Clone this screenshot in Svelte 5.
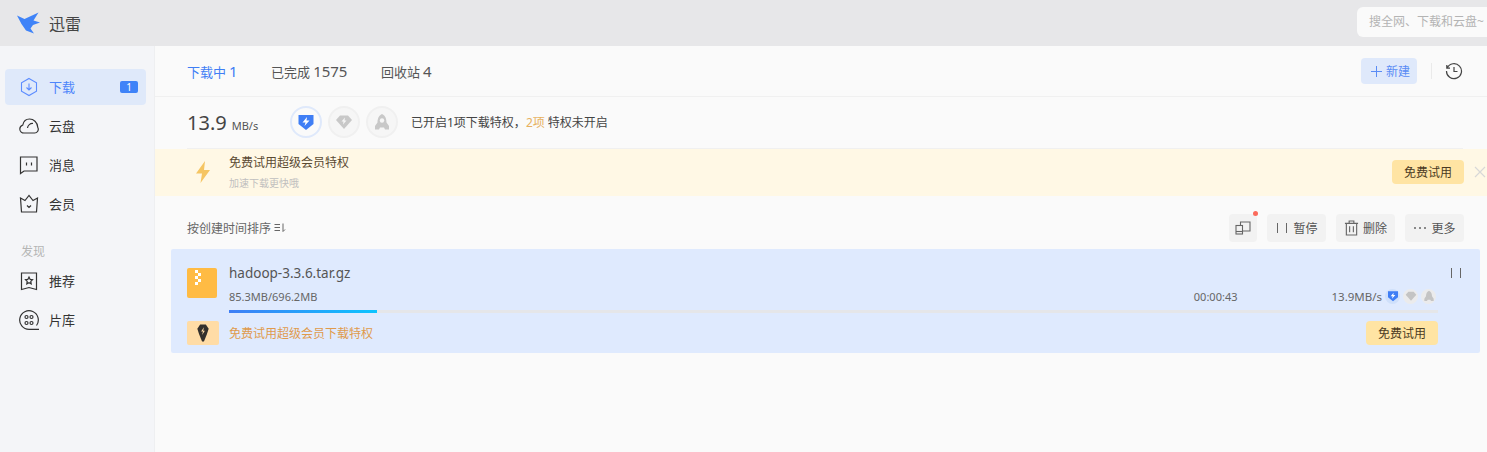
<script>
  let tabs = [
    { label: '下载中', count: 1, active: true },
    { label: '已完成', count: 1575 },
    { label: '回收站', count: 4 }
  ];
</script>

<div class="app">
  <header class="titlebar">
    <div class="brand">
      <svg class="logo" width="26" height="24" viewBox="0 0 26 24">
        <path fill="#3f83f8" d="M1 4.500 8.500 8 22.500 1.500 17.500 9.500 24 11.500 17 14 14.500 17.500 18 22.500 10 19.500 5.500 13 Z" />
      </svg>
      <span>迅雷</span>
    </div>
    <div class="search">搜全网、下载和云盘~</div>
  </header>

  <div class="body">
    <aside class="sidebar">
      <nav>
        <a class="nav active" href="#dl">
          <svg width="20" height="20" viewBox="0 0 20 20" fill="none" stroke="#5c8cff" stroke-width="1.100">
            <path d="M10 1.500 17.500 5.800V14.200L10 18.500 2.500 14.200V5.800Z" />
            <path d="M10 6.500V13M7.500 10.500 10 13 12.500 10.500" />
          </svg>
          <span>下载</span>
          <b class="count">1</b>
        </a>
        <a class="nav" href="#cloud">
          <svg width="20" height="20" viewBox="0 0 20 20" fill="none" stroke="#333" stroke-width="1.200">
            <path d="M5 17H15.500A3.700 3.700 0 0 0 18.800 11.500C18.500 6 14.500 3 10.500 3 7 3 4.500 5.500 3.800 9 1.500 10 .8 11.500 .8 13 .8 15.500 3 17 5 17Z" />
            <path d="M8.500 12A5 5 0 0 1 14 7.500" />
          </svg>
          <span>云盘</span>
        </a>
        <a class="nav" href="#msg">
          <svg width="20" height="20" viewBox="0 0 20 20" fill="none" stroke="#333" stroke-width="1.200">
            <path d="M1.500 2H18V16H5L1.500 18.500Z" />
            <path d="M7.500 7.500V10.500M12.500 7.500V10.500" />
          </svg>
          <span>消息</span>
        </a>
        <a class="nav" href="#vip">
          <svg width="20" height="20" viewBox="0 0 20 20" fill="none" stroke="#333" stroke-width="1.200">
            <path d="M1.500 4 6 6.500 10 1.500 14 6.500 18.500 4 17.500 18H2.500Z" />
            <path d="M8 11.500 10 13.500 12 11.500" />
          </svg>
          <span>会员</span>
        </a>
        <p class="nav-title">发现</p>
        <a class="nav" href="#rec">
          <svg width="20" height="20" viewBox="0 0 20 20" fill="none" stroke="#333" stroke-width="1.200">
            <path d="M2.500 2H17.500V18.500L10 16.500 2.500 18.500Z" />
            <path d="M10 6 11.200 8.400 13.500 8.700 11.800 10.400 12.200 12.800 10 11.600 7.800 12.800 8.200 10.400 6.500 8.700 8.800 8.400Z" />
          </svg>
          <span>推荐</span>
        </a>
        <a class="nav" href="#lib">
          <svg width="20" height="20" viewBox="0 0 20 20" fill="none" stroke="#333" stroke-width="1.200">
            <path d="M10 19.300A9.300 9.300 0 1 1 17.500 15.500M10 19.300H20" />
            <circle cx="7.500" cy="7" r="1.500" />
            <circle cx="12.500" cy="7" r="1.500" />
            <circle cx="7.500" cy="13" r="1.500" />
            <circle cx="12.500" cy="13" r="1.500" />
          </svg>
          <span>片库</span>
        </a>
      </nav>
    </aside>

    <main class="main">
      <div class="tabs">
        {#each tabs as tab}
          <span class="tab" class:current={tab.active}>{tab.label}<i>{tab.count}</i></span>
        {/each}
        <button class="new">
          <svg width="11" height="11" viewBox="0 0 11 11" stroke="#5a8cf5"><path d="M5.500 0V11M0 5.500H11" /></svg>
          新建
        </button>
        <span class="divider"></span>
        <svg class="history" width="18" height="18" viewBox="0 0 18 18" fill="none" stroke="#444" stroke-width="1.200">
          <path d="M2.200 6A7.500 7.500 0 1 1 1.500 9M1.800 3V6.200H5" />
          <path d="M9 5V9.500H12.500" />
        </svg>
      </div>

      <div class="speed-row">
        <div class="speed"><strong>13.9</strong><small>MB/s</small></div>
        <div class="perks">
          <span class="perk on">
            <svg width="18" height="18" viewBox="0 0 18 18">
              <path fill="#3f7ef5" d="M1.500 2H16.500V11L9 17 1.500 11Z" />
              <path fill="#fff" d="M10 4 5.500 9.500H8.500L7.500 13 12.500 7.500H9.500Z" />
            </svg>
          </span>
          <span class="perk">
            <svg width="18" height="18" viewBox="0 0 18 18">
              <path fill="#c8c8c8" d="M5 2.500H13L17 7 9 16 1 7Z" />
              <path fill="#f6f6f6" d="M10 4.500 6.500 8.500H8.500L8 11.500 11.500 7.500H9.500Z" />
            </svg>
          </span>
          <span class="perk">
            <svg width="18" height="18" viewBox="0 0 18 18">
              <path fill="#c8c8c8" d="M9 1C12.500 2.500 13.500 6 13.500 9.500L16 13V16.500H12L11 14.500H7L6 16.500H2V13L4.500 9.500C4.500 6 5.500 2.500 9 1Z" />
              <circle cx="9" cy="7.500" r="2.200" fill="#f6f6f6" />
            </svg>
          </span>
        </div>
        <p class="perk-text">已开启1项下载特权，<em>2项</em> 特权未开启</p>
      </div>

      <div class="banner">
        <svg class="bolt" width="18" height="24" viewBox="0 0 18 24">
          <path fill="#f5c563" d="M11 1 2 13.500H8L6.500 23 16 10H10Z" />
        </svg>
        <div class="banner-text">
          <p>免费试用超级会员特权</p>
          <small>加速下载更快哦</small>
        </div>
        <button class="trial">免费试用</button>
        <svg class="close" width="12" height="12" viewBox="0 0 12 12" stroke="#d8d8d8" stroke-width="1.200">
          <path d="M1 1 11 11M11 1 1 11" />
        </svg>
      </div>

      <div class="toolbar">
        <span class="sort">按创建时间排序
          <svg width="12" height="10" viewBox="0 0 12 10" fill="none" stroke="#666">
            <path d="M0.500 1.500H6M0.500 4.500H6M0.500 7.500H6M9 0.500V8.500L11 6.500" />
          </svg>
        </span>
        <div class="actions">
          <button class="tool square">
            <svg width="16" height="14" viewBox="0 0 16 14" fill="none" stroke="#666" stroke-width="1.100">
              <path d="M5.500 4V1H15V10H8" />
              <rect x="1" y="4.500" width="6.500" height="8.500" />
              <path d="M1 10.500H7.500" />
            </svg>
            <span class="dot"></span>
          </button>
          <button class="tool"><span class="bars"></span>暂停</button>
          <button class="tool">
            <svg width="15" height="16" viewBox="0 0 16 17" fill="none" stroke="#666" stroke-width="1.200">
              <path d="M1 3.500H15M5.500 3.500V1H10.500V3.500M2.500 3.500V16H13.500V3.500M6 6.500V13M10 6.500V13" />
            </svg>
            删除
          </button>
          <button class="tool">
            <svg width="14" height="4" viewBox="0 0 14 4" fill="#666">
              <circle cx="2" cy="2" r="1" />
              <circle cx="7" cy="2" r="1" />
              <circle cx="12" cy="2" r="1" />
            </svg>
            更多
          </button>
        </div>
      </div>

      <section class="task">
        <div class="task-main">
          <div class="file-icon">
            <span></span>
          </div>
          <div class="task-info">
            <div class="name-row">
              <span class="name">hadoop-3.3.6.tar.gz</span>
              <span class="bars task-pause"></span>
            </div>
            <div class="stats">
              <span>85.3MB/696.2MB</span>
              <span class="eta">00:00:43</span>
              <span class="rate">13.9MB/s</span>
              <span class="mini on">
                <svg width="12" height="12" viewBox="0 0 18 18">
                  <path fill="#3f7ef5" d="M1.500 2H16.500V11L9 17 1.500 11Z" />
                  <path fill="#fff" d="M10 4 5.500 9.500H8.500L7.500 13 12.500 7.500H9.500Z" />
                </svg>
              </span>
              <span class="mini">
                <svg width="12" height="12" viewBox="0 0 18 18">
                  <path fill="#c4c4c4" d="M5 2.500H13L17 7 9 16 1 7Z" />
                </svg>
              </span>
              <span class="mini">
                <svg width="12" height="12" viewBox="0 0 18 18">
                  <path fill="#c4c4c4" d="M9 1C12.500 2.500 13.500 6 13.500 9.500L16 13V16.500H12L11 14.500H7L6 16.500H2V13L4.500 9.500C4.500 6 5.500 2.500 9 1Z" />
                </svg>
              </span>
            </div>
            <div class="progress"><div class="fill" style="width: {(85.3 / 696.2) * 100}%"></div></div>
          </div>
        </div>
        <div class="task-promo">
          <span class="promo-icon">
            <svg width="12" height="18" viewBox="0 0 12 19">
              <path fill="#33302c" d="M3 0.500H9L12 5 10 11 7 18.500 5 18.500 2 11 0 5Z" />
              <path fill="#ffdca6" d="M7 3.500 4 8H6L5 11.500 8 7H6.200Z" />
            </svg>
          </span>
          <span class="promo-text">免费试用超级会员下载特权</span>
          <button class="trial">免费试用</button>
        </div>
      </section>
    </main>
  </div>
</div>

<style>
  :global(body) {
    margin: 0;
    background: #fafafa;
  }
  .app {
    width: 1487px;
    height: 452px;
    overflow: hidden;
    font-family: "Noto Sans", "Noto Sans CJK SC", sans-serif;
    font-size: 12px;
    color: #333;
  }
  button {
    font-family: inherit;
    border: none;
    cursor: pointer;
    padding: 0;
  }
  p {
    margin: 0;
  }

  .titlebar {
    height: 46px;
    background: #e7e7e9;
    display: flex;
    align-items: center;
    justify-content: space-between;
  }
  .brand {
    display: flex;
    align-items: center;
    gap: 7px;
    padding-left: 16px;
    font-size: 16px;
    color: #444;
  }
  .search {
    width: 130px;
    height: 30px;
    margin-top: -3px;
    box-sizing: border-box;
    padding-left: 12px;
    line-height: 30px;
    background: #fafafa;
    border-radius: 6px 0 0 6px;
    color: #b4b4b4;
    white-space: nowrap;
    overflow: hidden;
  }

  .body {
    display: flex;
    height: 406px;
  }
  .sidebar {
    width: 155px;
    flex: none;
    background: #f4f5f8;
    border-right: 1px solid #eeeff1;
    padding: 23px 8px 0 5px;
    box-sizing: border-box;
  }
  .nav {
    display: flex;
    align-items: center;
    height: 36px;
    margin-bottom: 3px;
    padding-left: 14px;
    gap: 10px;
    border-radius: 4px;
    color: #333;
    text-decoration: none;
    font-size: 13px;
  }
  .nav span {
    padding-bottom: 2px;
  }
  .nav.active {
    background: #dfe9fa;
    color: #4d85fb;
  }
  .count {
    margin-left: auto;
    margin-right: 8px;
    width: 18px;
    height: 12px;
    line-height: 12px;
    text-align: center;
    background: #3f83f8;
    color: #fff;
    border-radius: 2px;
    font-size: 10px;
    font-weight: 400;
  }
  .nav-title {
    margin: 20px 0 1px 16px;
    height: 20px;
    line-height: 20px;
    color: #b5b5b5;
  }

  .main {
    flex: 1;
    min-width: 0;
    background: #fafafa;
  }
  .tabs {
    height: 50px;
    border-bottom: 1px solid #f0f0f0;
    display: flex;
    align-items: center;
    padding: 0 24px 0 32px;
    gap: 33.500px;
    font-size: 13px;
    color: #555;
  }
  .tab i {
    font-style: normal;
    margin-left: 3px;
    font-size: 15px;
  }
  .tab.current {
    color: #3f7ef5;
  }
  .new {
    margin-left: auto;
    width: 56px;
    height: 26px;
    padding-left: 10px;
    display: flex;
    align-items: center;
    gap: 4px;
    background: #dfe9fb;
    color: #5a8cf5;
    border-radius: 4px;
    font-size: 12px;
  }
  .divider {
    width: 1px;
    height: 16px;
    background: #eaeaea;
    margin: 0 -20.500px 0 -19.500px;
  }
  .history {
    flex: none;
  }

  .speed-row {
    height: 50px;
    padding-bottom: 1px;
    margin: 0 24px 0 32px;
    border-bottom: 1px solid #f0f0f0;
    display: flex;
    align-items: center;
  }
  .speed {
    width: 103px;
    color: #444;
  }
  .speed strong {
    font-weight: 400;
    font-size: 20px;
  }
  .speed small {
    font-size: 11px;
    margin-left: 5px;
    color: #555;
  }
  .perks {
    display: flex;
    gap: 6px;
  }
  .perk {
    width: 28px;
    height: 28px;
    border: 2px solid #f0f0f0;
    border-radius: 50%;
    display: flex;
    align-items: center;
    justify-content: center;
    background: #f6f6f6;
  }
  .perk.on {
    border-color: #dfe9fb;
    background: #fafafa;
  }
  .perk-text {
    margin-left: 13px;
    color: #444;
  }
  .perk-text em {
    font-style: normal;
    color: #e7b15f;
  }

  .banner {
    height: 45px;
    padding: 0 1px 2px 39px;
    background: #fff8e5;
    display: flex;
    align-items: center;
  }
  .banner-text {
    margin-left: 17px;
  }
  .banner-text p {
    line-height: 17px;
    color: #5a4a32;
  }
  .banner-text small {
    display: block;
    margin-top: 5px;
    font-size: 10px;
    line-height: 14px;
    color: #bfbfbf;
  }
  .trial {
    width: 72px;
    height: 24px;
    background: #ffe4a3;
    color: #4a3a22;
    border-radius: 4px;
    font-size: 12px;
  }
  .banner .trial {
    margin-left: auto;
  }
  .close {
    margin-left: 10px;
  }

  .toolbar {
    height: 30px;
    margin: 17px 23px 6px 32px;
    display: flex;
    align-items: center;
    justify-content: space-between;
    color: #666;
  }
  .actions {
    display: flex;
    gap: 10px;
  }
  .tool {
    position: relative;
    height: 28px;
    width: 59px;
    background: #f2f2f2;
    border-radius: 4px;
    color: #555;
    font-size: 12px;
    display: flex;
    align-items: center;
    justify-content: center;
    gap: 4px;
  }
  .tool.square {
    width: 28px;
  }
  .dot {
    position: absolute;
    top: -3px;
    right: -1px;
    width: 5px;
    height: 5px;
    border-radius: 50%;
    background: #fb6a5b;
  }
  .bars {
    display: inline-block;
    width: 8px;
    height: 10px;
    margin: 0 2px;
    border-left: 1px solid #666;
    border-right: 1px solid #666;
  }

  .task {
    margin: 0 7px 0 16px;
    height: 104px;
    background: #dfeafe;
    border-radius: 2px;
    padding: 16px 42px 0 16px;
    box-sizing: border-box;
  }
  .task-main {
    display: flex;
    align-items: flex-start;
    gap: 12px;
  }
  .file-icon {
    width: 30px;
    height: 30px;
    flex: none;
    margin-top: 3px;
    background: #ffbb44;
    border-radius: 2px;
    position: relative;
  }
  .file-icon span {
    position: absolute;
    left: 8px;
    top: 2px;
    width: 3px;
    height: 3px;
    background: #fff;
    box-shadow: 3px 3px #fff, 0 6px #fff, 3px 9px #fff, 0 12px #fff;
  }
  .task-info {
    flex: 1;
    min-width: 0;
  }
  .name-row {
    display: flex;
    align-items: center;
    justify-content: space-between;
    height: 16px;
  }
  .name {
    font-size: 13.500px;
    color: #555;
  }
  .task-pause {
    margin: 0 -23px 0 0;
  }
  .stats {
    display: flex;
    align-items: center;
    margin-top: 6px;
    padding-right: 2px;
    height: 18px;
    font-size: 11px;
    color: #666;
  }
  .eta {
    margin-left: auto;
    margin-right: 94px;
  }
  .rate {
    font-size: 11.500px;
  }
  .mini {
    width: 15px;
    height: 15px;
    margin-left: 3px;
    border-radius: 50%;
    background: #ebebec;
    display: flex;
    align-items: center;
    justify-content: center;
  }
  .mini.on {
    background: #cfe0fb;
  }
  .progress {
    height: 3px;
    margin-top: 5px;
    background: #e5e6e9;
  }
  .fill {
    height: 100%;
    background: linear-gradient(90deg, #3f7ef5, #0cc4ff);
  }
  .task-promo {
    display: flex;
    align-items: center;
    margin-top: 8px;
  }
  .promo-icon {
    width: 32px;
    height: 24px;
    background: #ffdca6;
    border-radius: 2px;
    display: flex;
    align-items: center;
    justify-content: center;
    flex: none;
  }
  .promo-text {
    margin-left: 10px;
    color: #e09a4c;
  }
  .task-promo .trial {
    margin-left: auto;
  }
</style>
